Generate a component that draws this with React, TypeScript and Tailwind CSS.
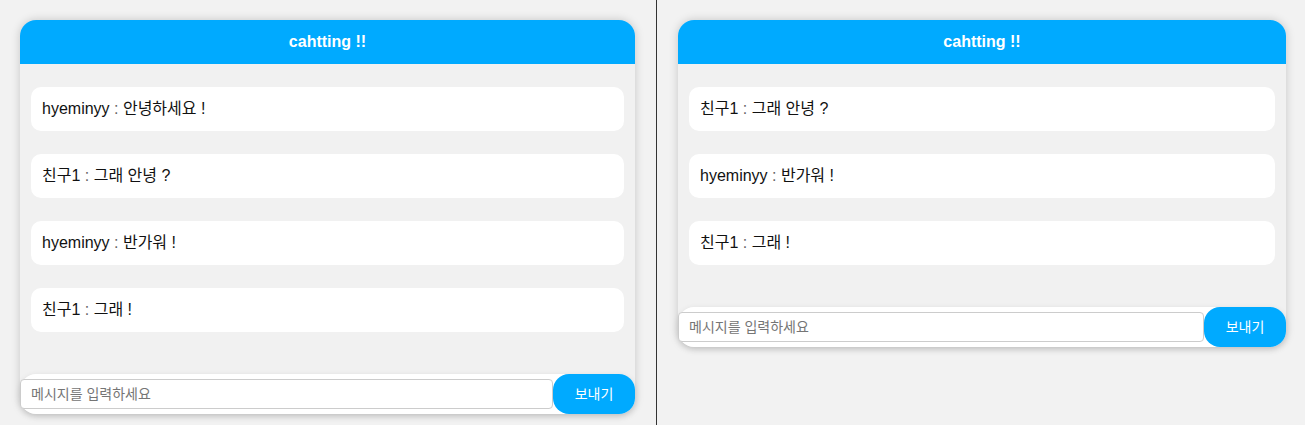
import React from "react";

type Message = { user: string; text: string };

const leftMessages: Message[] = [
  { user: "hyeminyy", text: "안녕하세요 !" },
  { user: "친구1", text: "그래 안녕 ?" },
  { user: "hyeminyy", text: "반가워 !" },
  { user: "친구1", text: "그래 !" },
];

const rightMessages: Message[] = [
  { user: "친구1", text: "그래 안녕 ?" },
  { user: "hyeminyy", text: "반가워 !" },
  { user: "친구1", text: "그래 !" },
];

function ChatBox({ messages }: { messages: Message[] }) {
  return (
    <div className="rounded-2xl bg-[#f1f1f1] shadow-[0_0_10px_rgba(0,0,0,0.18)]">
      <div className="flex h-11 items-center justify-center rounded-t-2xl bg-[#00aaff] text-base font-bold text-white">
        cahtting !!
      </div>
      <div className="flex flex-col gap-[23px] px-[11px] pt-[23px] pb-[42px]">
        {messages.map((m, i) => (
          <div
            key={i}
            className="flex h-11 items-center whitespace-pre rounded-[10px] bg-white px-[11px] text-base text-[#111111]"
          >
            {m.user}
            <span className="text-[#666666]"> : </span>
            {m.text}
          </div>
        ))}
      </div>
      <div className="flex h-10 items-center rounded-2xl bg-white shadow-[0_2px_6px_rgba(0,0,0,0.12)]">
        <input
          type="text"
          placeholder="메시지를 입력하세요"
          className="h-[30px] min-w-0 flex-1 rounded border border-[#cccccc] bg-white px-2.5 text-sm outline-none placeholder:text-[#757575]"
        />
        <button className="h-10 w-[82px] rounded-[16px] bg-[#00aaff] text-sm text-white">
          보내기
        </button>
      </div>
    </div>
  );
}

export default function App() {
  return (
    <div
      className="flex h-[425px] bg-[#f2f2f2]"
      style={{ fontFamily: '"Liberation Sans", "Noto Sans CJK KR", sans-serif' }}
    >
      <div className="w-[657px] shrink-0 border-r border-[#333333] py-5 pl-5 pr-[21px]">
        <ChatBox messages={leftMessages} />
      </div>
      <div className="flex-1 py-5 pl-[21px] pr-[19px]">
        <ChatBox messages={rightMessages} />
      </div>
    </div>
  );
}
